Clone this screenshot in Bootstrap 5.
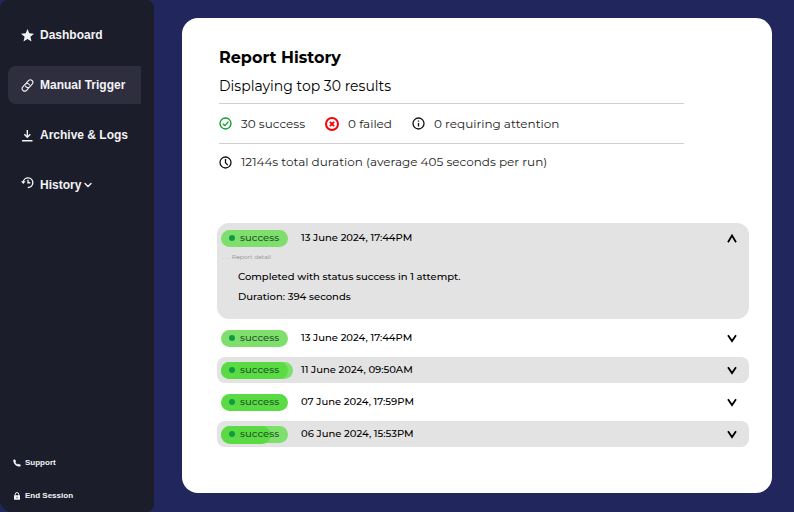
<!DOCTYPE html>
<html lang="en">
<head>
<meta charset="utf-8">
<meta name="viewport" content="width=device-width, initial-scale=1">
<title>Report History</title>
<link href="https://cdn.jsdelivr.net/npm/bootstrap@5.3.0/dist/css/bootstrap.min.css" rel="stylesheet">
<style>
body { background: #21275c; color: #000; font-family: Montserrat, Inter, sans-serif; }
svg { display: block; flex: none; }
.sidebar { width: 154px; background: #1c1d2b; border-radius: 8px 8px 8px 12px; padding: 16px 13px 7px 8px; font-family: "Liberation Sans", Arial, sans-serif; font-weight: 700; }
.menu { gap: 12px; }
.menu a { height: 38px; padding-left: 13px; gap: 6px; color: #f3f3f6; font-size: 12px; line-height: 18px; border-radius: 8px 0 0 8px; white-space: nowrap; }
.menu a.active { background: #2f2e3e; }
.menu .caret { margin-left: -3px; }
.foot { gap: 15px; }
.foot a { height: 18px; padding-left: 5px; gap: 4px; color: #f3f3f6; font-size: 8px; line-height: 18px; }
.stage { padding: 18px 22px 19px 28px; min-width: 0; }
.report { border-radius: 16px; padding: 29px 23px 24px 35px; }
.summary { margin: 0 65px 0 2px; }
h1 { font-size: 16px; line-height: 22px; font-weight: 700; }
.lead-in { font-size: 14px; line-height: 20px; padding: 7px 0; }
.stats { height: 41px; gap: 20px; border: solid #cfcfcf; border-width: 1px 0; font-size: 12px; color: #1c1c1c; }
.stat { gap: 9px; }
.total { height: 36px; font-size: 12px; color: #1c1c1c; }
.runs { margin-top: 43px; gap: 6px; }
.run { border-radius: 8px; }
.run.shade { background: #e3e3e3; }
.run.open { border-radius: 12px; padding: 2px 0 12px; }
.run button { height: 26px; padding: 0 12px 0 4px; gap: 13px; font-size: 10px; line-height: 16px; font-weight: 500; color: #000; }
.pill { position: relative; z-index: 0; width: 67px; height: 17px; padding-left: 8px; gap: 5px; border-radius: 9px; background: #7edf6c; color: #22582a; }
.pill.full { background: #5bdb43; }
.pill.wide::before, .pill.wide::after, .pill.part::after { content: ""; position: absolute; z-index: -1; border-radius: 9px; left: 0; top: 0; height: 17px; background: #5bdb43; }
.pill.wide::before { width: 72px; background: #7edf6c; }
.pill.wide::after { width: 67px; }
.pill.part::after { width: 50px; height: 18px; }
.dot { width: 6px; height: 6px; border-radius: 50%; background: #119a43; }
.detail { padding-left: 21px; font-size: 10px; line-height: 20px; font-weight: 500; }
.detail small { display: block; margin-left: -15px; font-size: 6px; line-height: 8px; color: #8a8a8a; font-weight: 400; padding: 2px 0 6px; white-space: pre; }
</style>
<script src="https://cdn.jsdelivr.net/npm/bootstrap@5.3.0/dist/js/bootstrap.bundle.min.js"></script>
</head>
<body>
<svg class="d-none" aria-hidden="true">
  <symbol id="down" viewBox="0 0 10 10"><path d="M1 2.300 5 8.100l4-5.800" fill="none" stroke="currentColor" stroke-width="1.800"/></symbol>
  <symbol id="up" viewBox="0 0 10 10"><path d="M1 9.300 5 2.500l4 6.800" fill="none" stroke="currentColor" stroke-width="1.800"/></symbol>
</svg>
<div class="d-flex min-vh-100">
  <aside class="sidebar d-flex flex-column justify-content-between flex-shrink-0">
    <nav class="menu d-flex flex-column" aria-label="Main">
      <a href="#" class="d-flex align-items-center text-decoration-none">
        <svg width="13" height="13" viewBox="0 0 13 13"><path d="M6.500 0 8.300 4.300l4.700.4-3.600 3 1.100 4.900-4-2.600-4 2.600 1.100-4.900L0 4.700l4.700-.4z" fill="currentColor"/></svg>
        <span>Dashboard</span></a>
      <a href="#" class="active d-flex align-items-center text-decoration-none" aria-current="page">
        <svg width="13" height="13" viewBox="0 0 13 13"><g transform="rotate(-48 6.500 6.500)" fill="none" stroke="currentColor" stroke-width="1.100" stroke-linecap="round"><path d="M5.300 9H2.300a2.500 2.500 0 0 1 0-5h3.700a2.500 2.500 0 0 1 2.200 3.700"/><path d="M7.700 4h3a2.500 2.500 0 0 1 0 5H7a2.500 2.500 0 0 1-2.200-3.700"/></g></svg>
        <span>Manual Trigger</span></a>
      <a href="#" class="d-flex align-items-center text-decoration-none">
        <svg width="13" height="13" viewBox="0 0 13 13"><path d="M6.300 1v7M3.300 5.300l3 3 3-3M1 11.800h10.500" fill="none" stroke="currentColor" stroke-width="1.400"/></svg>
        <span>Archive &amp; Logs</span></a>
      <a href="#" class="d-flex align-items-center text-decoration-none">
        <svg width="13" height="18" viewBox="0 0 13 18"><path d="M2.200 6.500A4.800 4.800 0 1 1 6.800 11.500M7 3.800v3h2.300" fill="none" stroke="currentColor" stroke-width="1.400"/><path d="M0 5.300h4.600L2.300 8z" fill="currentColor"/></svg>
        <span>History</span>
        <svg class="caret" width="8" height="8" viewBox="0 0 8 8"><path d="m1 2.500 3 3 3-3" fill="none" stroke="currentColor" stroke-width="1.400" stroke-linecap="round"/></svg></a>
    </nav>
    <nav class="foot d-flex flex-column" aria-label="Account">
      <a href="#" class="d-flex align-items-center text-decoration-none">
        <svg width="8" height="8" viewBox="0 0 8 8"><path d="M.3.900 1.800.3l1.300 2-.8 1q.8 1.500 2.300 2.300l1-.9 2.200 1.200-.5 1.600C3.500 8 0 4.500.3.900z" fill="currentColor"/></svg>
        <span>Support</span></a>
      <a href="#" class="d-flex align-items-center text-decoration-none">
        <svg width="8" height="8" viewBox="0 0 8 8"><path d="M2.200 4V2.400a1.800 1.800 0 0 1 3.600 0V4" fill="none" stroke="currentColor" stroke-width="1"/><rect x="1" y="3.300" width="6" height="4.500" rx=".6" fill="currentColor"/><path d="M4 4.800v1.500" stroke="#1c1d2b" stroke-width=".8"/></svg>
        <span>End Session</span></a>
    </nav>
  </aside>
  <main class="stage d-flex flex-grow-1">
    <section class="report bg-white flex-grow-1">
      <div class="summary">
        <h1 class="m-0">Report History</h1>
        <p class="lead-in m-0">Displaying top 30 results</p>
        <div class="stats d-flex align-items-center">
          <div class="stat d-flex align-items-center">
            <svg width="13" height="13" viewBox="0 0 13 13" fill="none" stroke="#0a9a24"><circle cx="6.500" cy="6.500" r="5.500" stroke-width="1.300"/><path d="m3.800 6.600 2 2 3.700-4" stroke-width="1.300"/></svg>
            <span>30 success</span></div>
          <div class="stat d-flex align-items-center">
            <svg width="14" height="14" viewBox="0 0 14 14" fill="none" stroke="#f50508"><circle cx="7" cy="7" r="6" stroke-width="2"/><path d="m4.900 4.900 4.200 4.200M9.100 4.900 4.900 9.100" stroke-width="2"/></svg>
            <span>0 failed</span></div>
          <div class="stat d-flex align-items-center">
            <svg width="13" height="13" viewBox="0 0 13 13" fill="none" stroke="#111"><circle cx="6.500" cy="6.500" r="5.500" stroke-width="1.300"/><path d="M6.500 3.500v1.300M6.500 6v3.500" stroke-width="1.300"/></svg>
            <span>0 requiring attention</span></div>
        </div>
        <div class="total stat d-flex align-items-center">
          <svg width="13" height="13" viewBox="0 0 13 13" fill="none" stroke="#111"><circle cx="6.500" cy="6.500" r="5.500" stroke-width="1.300"/><path d="M6.500 3v3.800l2.300 2.300" stroke-width="1.300"/></svg>
          <span>12144s total duration (average 405 seconds per run)</span></div>
      </div>
      <div class="runs d-flex flex-column">
        <div class="run shade open">
          <button type="button" class="btn border-0 w-100 d-flex align-items-center" data-bs-toggle="collapse" data-bs-target="#run1" aria-expanded="true" aria-controls="run1">
            <span class="pill d-flex align-items-center"><i class="dot"></i>success</span><span>13 June 2024, 17:44PM</span>
            <svg class="ms-auto" width="10" height="10"><use href="#up"/></svg></button>
          <div id="run1" class="collapse show"><div class="detail">
            <small>.  .  Report detail</small>
            <p class="m-0">Completed with status success in 1 attempt.</p>
            <p class="m-0">Duration: 394 seconds</p>
          </div></div>
        </div>
        <div class="run">
          <button type="button" class="btn border-0 w-100 d-flex align-items-center" aria-expanded="false">
            <span class="pill d-flex align-items-center"><i class="dot"></i>success</span><span>13 June 2024, 17:44PM</span>
            <svg class="ms-auto" width="10" height="10"><use href="#down"/></svg></button>
        </div>
        <div class="run shade">
          <button type="button" class="btn border-0 w-100 d-flex align-items-center" aria-expanded="false">
            <span class="pill wide d-flex align-items-center"><i class="dot"></i>success</span><span>11 June 2024, 09:50AM</span>
            <svg class="ms-auto" width="10" height="10"><use href="#down"/></svg></button>
        </div>
        <div class="run">
          <button type="button" class="btn border-0 w-100 d-flex align-items-center" aria-expanded="false">
            <span class="pill full d-flex align-items-center"><i class="dot"></i>success</span><span>07 June 2024, 17:59PM</span>
            <svg class="ms-auto" width="10" height="10"><use href="#down"/></svg></button>
        </div>
        <div class="run shade">
          <button type="button" class="btn border-0 w-100 d-flex align-items-center" aria-expanded="false">
            <span class="pill part d-flex align-items-center"><i class="dot"></i>success</span><span>06 June 2024, 15:53PM</span>
            <svg class="ms-auto" width="10" height="10"><use href="#down"/></svg></button>
        </div>
      </div>
    </section>
  </main>
</div>
</body>
</html>
